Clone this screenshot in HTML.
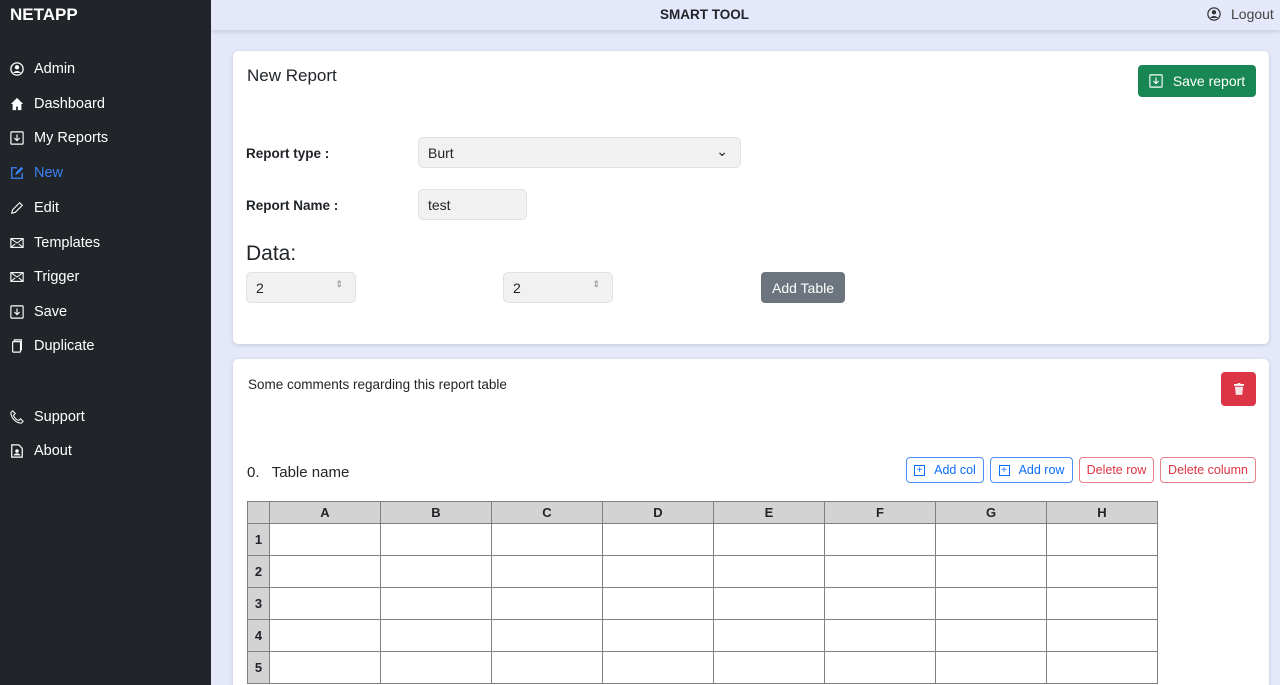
<!DOCTYPE html><html style="overflow:hidden;height:685px"><head><style>
*{box-sizing:border-box;margin:0;padding:0}
body{width:1280px;height:685px;overflow:hidden;font-family:"Liberation Sans",sans-serif;background:#e4e8f9;position:relative;color:#212529}
.sb{position:absolute;left:0;top:0;width:211px;height:685px;background:#212529;color:#fff}
.sb .logo{position:absolute;left:10px;top:5px;font-weight:bold;font-size:17px}
.nav{position:absolute;left:10px;font-size:14.5px;display:flex;align-items:center}
.nav svg{width:14px;height:14px;margin-right:10px}
.hd{position:absolute;left:211px;top:0;width:1069px;height:30px;background:#e4e8fa;box-shadow:0 2px 4px rgba(0,0,0,.12)}
.card{position:absolute;left:233px;width:1036px;background:#fff;border-radius:5px;box-shadow:0 1px 4px rgba(0,0,0,.15)}
.lbl{position:absolute;font-weight:bold;font-size:13.5px}
.inp{position:absolute;background:#f1f1f1;border:1px solid #dee2e6;border-radius:5px;font-size:14px;padding:7px 9px}
.btn{position:absolute;border-radius:4px;font-size:12.5px;display:flex;align-items:center;justify-content:center;background:#fff}
table{position:absolute;left:14px;top:142px;border-collapse:collapse}
td,th{border:1px solid #808080;height:32px;width:111px;font-size:13px}
th{background:#d3d3d3;height:22px}
td.i{width:22px;background:#d3d3d3;font-weight:bold;text-align:center}
</style></head><body>
<div class="sb"><div class="logo">NETAPP</div>
<div class="nav" style="top:61px"><svg viewBox="0 0 16 16"><circle cx="8" cy="8" r="7" fill="none" stroke="#fff" stroke-width="1.5"/><circle cx="8" cy="6" r="2.5" fill="#fff"/><path d="M3.5 12.5c2-3 7-3 9 0" fill="#fff"/></svg>Admin</div>
<div class="nav" style="top:96px"><svg viewBox="0 0 16 16"><path d="M8 1L1 8h2v7h4v-4h2v4h4V8h2z" fill="#fff"/></svg>Dashboard</div>
<div class="nav" style="top:130px"><svg viewBox="0 0 16 16"><rect x="1" y="1" width="14" height="14" rx="1" fill="none" stroke="#fff" stroke-width="1.3"/><path d="M8 4v7M5 8l3 3 3-3" fill="none" stroke="#fff" stroke-width="1.3"/></svg>My Reports</div>
<div class="nav" style="top:165px;color:#3b82f6"><svg viewBox="0 0 16 16"><path d="M8 2H2v12h12V8" fill="none" stroke="#3b82f6" stroke-width="1.5"/><path d="M6 10l1-3 6-6 2 2-6 6z" fill="#3b82f6"/></svg>New</div>
<div class="nav" style="top:200px"><svg viewBox="0 0 16 16"><path d="M2 14l1-4 8-8 3 3-8 8z" fill="none" stroke="#fff" stroke-width="1.3"/></svg>Edit</div>
<div class="nav" style="top:235px"><svg viewBox="0 0 16 16"><rect x="1" y="3" width="14" height="10" fill="none" stroke="#fff" stroke-width="1.3"/><path d="M1 3l7 5 7-5M1 13l5-4M15 13l-5-4" fill="none" stroke="#fff" stroke-width="1.2"/></svg>Templates</div>
<div class="nav" style="top:269px"><svg viewBox="0 0 16 16"><rect x="1" y="3" width="14" height="10" fill="none" stroke="#fff" stroke-width="1.3"/><path d="M1 3l7 5 7-5M1 13l5-4M15 13l-5-4" fill="none" stroke="#fff" stroke-width="1.2"/></svg>Trigger</div>
<div class="nav" style="top:304px"><svg viewBox="0 0 16 16"><rect x="1" y="1" width="14" height="14" rx="1" fill="none" stroke="#fff" stroke-width="1.3"/><path d="M8 4v7M5 8l3 3 3-3" fill="none" stroke="#fff" stroke-width="1.3"/></svg>Save</div>
<div class="nav" style="top:338px"><svg viewBox="0 0 16 16"><rect x="3" y="3" width="9" height="12" rx="1" fill="none" stroke="#fff" stroke-width="1.3"/><path d="M5 3V1h8v12" fill="none" stroke="#fff" stroke-width="1.3"/></svg>Duplicate</div>
<div class="nav" style="top:409px"><svg viewBox="0 0 16 16"><path d="M3 1l3 3-2 2c1 3 3 5 6 6l2-2 3 3-2 2C7 15 1 9 1 3z" fill="none" stroke="#fff" stroke-width="1.2"/></svg>Support</div>
<div class="nav" style="top:443px"><svg viewBox="0 0 16 16"><path d="M2 1h8l4 4v10H2z" fill="none" stroke="#fff" stroke-width="1.4"/><circle cx="8" cy="8" r="2" fill="#fff"/><path d="M4 13c1-3 7-3 8 0z" fill="#fff"/></svg>About</div>
</div>
<div class="hd"><div style="position:absolute;left:449px;top:7px;font-weight:bold;font-size:13.5px">SMART TOOL</div>
<div style="position:absolute;left:996px;top:6px;font-size:14px;color:#444;display:flex;align-items:center"><svg width="14" height="14" viewBox="0 0 16 16" style="margin-right:10px"><circle cx="8" cy="8" r="7" fill="none" stroke="#333" stroke-width="1.4"/><circle cx="8" cy="6" r="2.5" fill="#333"/><path d="M3.5 12.5c2-3 7-3 9 0" fill="#333"/></svg>Logout</div></div>
<div class="card" style="top:51px;height:293px">
<div style="position:absolute;left:14px;top:15px;font-size:17px">New Report</div>
<div class="btn" style="left:905px;top:14px;width:118px;height:32px;background:#198754;color:#fff;font-size:14px"><svg width="14" height="14" viewBox="0 0 16 16" style="margin-right:10px"><rect x="1" y="1" width="14" height="14" rx="1" fill="none" stroke="#fff" stroke-width="1.3"/><path d="M8 4v7M5 8l3 3 3-3" fill="none" stroke="#fff" stroke-width="1.3"/></svg>Save report</div>
<div class="lbl" style="left:13px;top:95px">Report type :</div>
<div class="inp" style="left:185px;top:86px;width:323px;height:31px">Burt<span style="position:absolute;right:12px;top:5px">⌄</span></div>
<div class="lbl" style="left:13px;top:147px">Report Name :</div>
<div class="inp" style="left:185px;top:138px;width:109px;height:31px">test</div>
<div style="position:absolute;left:13px;top:191px;font-size:21px">Data:</div>
<div class="inp" style="left:13px;top:221px;width:110px;height:31px">2<span style="position:absolute;right:12px;top:6px;font-size:9px;color:#888">⇕</span></div>
<div class="inp" style="left:270px;top:221px;width:110px;height:31px">2<span style="position:absolute;right:12px;top:6px;font-size:9px;color:#888">⇕</span></div>
<div class="btn" style="left:528px;top:221px;width:84px;height:31px;background:#6c757d;color:#fff;font-size:14px">Add Table</div>
</div>
<div class="card" style="top:359px;height:340px">
<div style="position:absolute;left:15px;top:18px;font-size:13.5px">Some comments regarding this report table</div>
<div class="btn" style="left:988px;top:13px;width:35px;height:34px;background:#dc3545"><svg width="10" height="12" viewBox="0 0 11 13"><rect x="0" y="1" width="11" height="2" fill="#fff"/><rect x="4" y="0" width="3" height="2" fill="#fff"/><path d="M1 4h9l-1 9H2z" fill="#fff" opacity=".85"/></svg></div>
<div style="position:absolute;left:14px;top:105px;font-size:15px">0.&nbsp;&nbsp; Table name</div>
<div class="btn" style="left:673px;top:98px;width:78px;height:26px;border:1px solid #4d8ff7;color:#0d6efd"><span style="border:1px solid #0d6efd;width:11px;height:11px;font-size:10px;line-height:9px;text-align:center;margin-right:9px">+</span>Add col</div>
<div class="btn" style="left:757px;top:98px;width:83px;height:26px;border:1px solid #4d8ff7;color:#0d6efd"><span style="border:1px solid #0d6efd;width:11px;height:11px;font-size:10px;line-height:9px;text-align:center;margin-right:9px">+</span>Add row</div>
<div class="btn" style="left:846px;top:98px;width:75px;height:26px;border:1px solid #e57f89;color:#dc3545">Delete row</div>
<div class="btn" style="left:927px;top:98px;width:96px;height:26px;border:1px solid #e57f89;color:#dc3545">Delete column</div>
<table><tr><th style="width:22px"></th><th>A</th><th>B</th><th>C</th><th>D</th><th>E</th><th>F</th><th>G</th><th>H</th></tr>
<tr><td class="i">1</td><td></td><td></td><td></td><td></td><td></td><td></td><td></td><td></td></tr>
<tr><td class="i">2</td><td></td><td></td><td></td><td></td><td></td><td></td><td></td><td></td></tr>
<tr><td class="i">3</td><td></td><td></td><td></td><td></td><td></td><td></td><td></td><td></td></tr>
<tr><td class="i">4</td><td></td><td></td><td></td><td></td><td></td><td></td><td></td><td></td></tr>
<tr><td class="i">5</td><td></td><td></td><td></td><td></td><td></td><td></td><td></td><td></td></tr>
</table></div>
</body></html>
